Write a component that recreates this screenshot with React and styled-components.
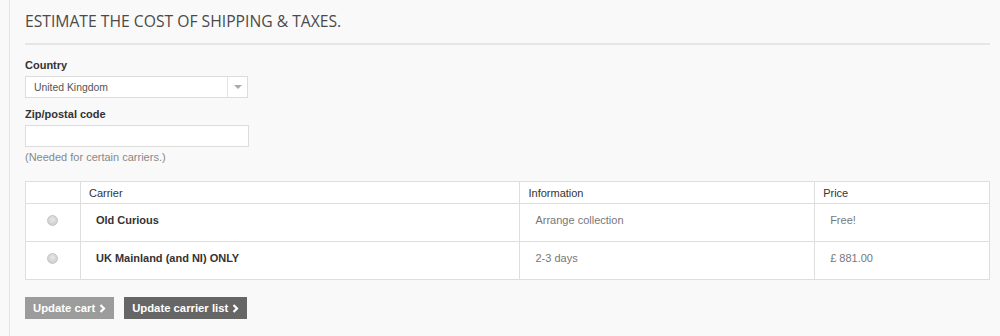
import React from "react";
import styled, { createGlobalStyle } from "styled-components";

const Global = createGlobalStyle`
  html, body { margin: 0; padding: 0; background: #f9f9f9; }
  body { font-family: Arial, "Liberation Sans", sans-serif; }
  * { box-sizing: border-box; }
`;

const Page = styled.div`
  width: 1000px;
  height: 336px;
  background: #f9f9f9;
  padding-left: 9px;
  overflow: hidden;
`;

const Panel = styled.div`
  border-left: 1px solid #e3e3e3;
  height: 100%;
  padding: 11px 10px 0 15px;
`;

const Title = styled.h3`
  margin: 0;
  font-family: "Open Sans", sans-serif;
  font-weight: 500;
  font-size: 15.7px;
  line-height: 20px;
  color: #4a4a4a;
  padding-bottom: 12px;
  border-bottom: 2px solid #e6e6e6;
`;

const Field = styled.div`
  display: flex;
  flex-direction: column;
  align-items: flex-start;
  margin-top: ${(p) => p.$mt || 0}px;
`;

const Label = styled.label`
  font-family: "Liberation Sans", Arial, sans-serif;
  font-size: 11px;
  font-weight: 700;
  color: #333;
  line-height: 14px;
  margin-bottom: 4px;
`;

const Select = styled.div`
  width: 223px;
  height: 22px;
  background: #fff;
  border: 1px solid #dcdcdc;
  display: flex;
  align-items: center;
  justify-content: space-between;
  font-family: "Liberation Sans", Arial, sans-serif;
  font-size: 10.4px;
  color: #555;
  padding-left: 8px;
`;

const Arrow = styled.span`
  width: 20px;
  height: 20px;
  border-left: 1px solid #e3e3e3;
  display: flex;
  align-items: center;
  justify-content: center;
  &::after {
    content: "";
    border-left: 4px solid transparent;
    border-right: 4px solid transparent;
    border-top: 4px solid #aaa;
  }
`;

const Input = styled.div`
  width: 224px;
  height: 22px;
  background: #fff;
  border: 1px solid #dcdcdc;
`;

const Hint = styled.div`
  font-family: "Liberation Sans", Arial, sans-serif;
  font-size: 11px;
  color: #888;
  margin-top: 3px;
  line-height: 14px;
`;

const Table = styled.table`
  margin-top: 17px;
  width: 965px;
  border-collapse: collapse;
  background: #fff;
  font-family: "Liberation Sans", Arial, sans-serif;
  font-size: 11px;
`;

const Th = styled.th`
  border: 1px solid #dedede;
  height: 22px;
  padding: 0 8px;
  text-align: left;
  font-weight: 400;
  color: #333;
  width: ${(p) => p.$w}px;
`;

const Td = styled.td`
  border: 1px solid #dedede;
  height: 38px;
  padding: 9px 15px 0;
  vertical-align: top;
  line-height: 14px;
  color: ${(p) => (p.$bold ? "#333" : "#777")};
  font-weight: ${(p) => (p.$bold ? 700 : 400)};
  text-align: ${(p) => (p.$center ? "center" : "left")};
`;

const Radio = styled.span`
  display: inline-block;
  width: 11px;
  height: 11px;
  border-radius: 50%;
  margin-top: 2px;
  background: radial-gradient(circle at 50% 40%, #e8e8e8 0%, #cfcfcf 70%, #bdbdbd 100%);
  border: 1px solid #c8c8c8;
`;

const Buttons = styled.div`
  display: flex;
  gap: 10px;
  margin-top: 17px;
`;

const Button = styled.button`
  height: 22px;
  border: none;
  padding: 0 8px 0 8px;
  background: ${(p) => (p.$dark ? "#666" : "#9c9c9c")};
  color: #fff;
  font-family: "Liberation Sans", Arial, sans-serif;
  font-weight: 700;
  font-size: 11.3px;
  display: flex;
  align-items: center;
  gap: 4px;
`;

const Chevron = () => (
  <svg width="7" height="9" viewBox="0 0 7 9">
    <path d="M1.5 1 L5 4.5 L1.5 8" fill="none" stroke="#fff" strokeWidth="2.2" />
  </svg>
);

export default function App() {
  const rows = [
    ["Old Curious", "Arrange collection", "Free!"],
    ["UK Mainland (and NI) ONLY", "2-3 days", "£ 881.00"],
  ];
  return (
    <Page>
      <Global />
      <Panel>
        <Title>ESTIMATE THE COST OF SHIPPING &amp; TAXES.</Title>
        <Field $mt={13}>
          <Label>Country</Label>
          <Select>
            United Kingdom
            <Arrow />
          </Select>
        </Field>
        <Field $mt={9}>
          <Label>Zip/postal code</Label>
          <Input />
          <Hint>(Needed for certain carriers.)</Hint>
        </Field>
        <Table>
          <thead>
            <tr>
              <Th $w={55}></Th>
              <Th $w={440}>Carrier</Th>
              <Th $w={295}>Information</Th>
              <Th $w={175}>Price</Th>
            </tr>
          </thead>
          <tbody>
            {rows.map((r) => (
              <tr key={r[0]}>
                <Td $center>
                  <Radio />
                </Td>
                <Td $bold>{r[0]}</Td>
                <Td>{r[1]}</Td>
                <Td>{r[2]}</Td>
              </tr>
            ))}
          </tbody>
        </Table>
        <Buttons>
          <Button>
            Update cart <Chevron />
          </Button>
          <Button $dark>
            Update carrier list <Chevron />
          </Button>
        </Buttons>
      </Panel>
    </Page>
  );
}
